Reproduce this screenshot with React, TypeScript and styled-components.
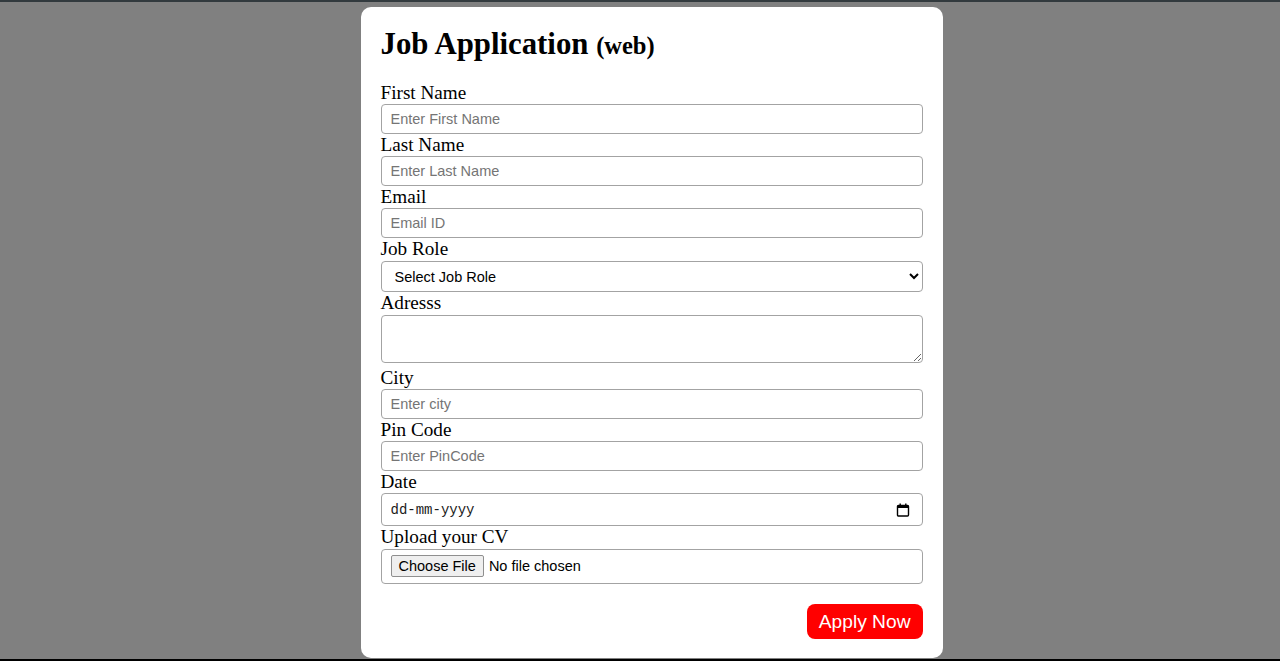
import styled, { createGlobalStyle } from 'styled-components';

const GlobalStyle = createGlobalStyle`
* {
  box-sizing: border-box;
}
body {
  margin: 0;
  background: #808080;
  font-family: "Liberation Serif", "Times New Roman", serif;
}
`;

const fields = [
  { label: 'First Name', placeholder: 'Enter First Name' },
  { label: 'Last Name', placeholder: 'Enter Last Name' },
  { label: 'Email', placeholder: 'Email ID', type: 'email' },
];

const CalendarIcon = () => (
  <svg width="14" height="14" viewBox="0 0 14 14" fill="none">
    <rect x="1.5" y="2.5" width="11" height="10.5" rx="1" stroke="#000" strokeWidth="1.4" />
    <rect x="1.5" y="2.5" width="11" height="2.5" fill="#000" />
    <rect x="3.5" y="0.5" width="1.4" height="2.5" fill="#000" />
    <rect x="9.1" y="0.5" width="1.4" height="2.5" fill="#000" />
  </svg>
);

const App = () => {
  return (
    <>
      <GlobalStyle />
      <Page>
        <Card>
          <Title>
            Job Application <Small>(web)</Small>
          </Title>

          <Form onSubmit={(e) => e.preventDefault()}>
            {fields.map((f) => (
              <Field key={f.label}>
                <Label>{f.label}</Label>
                <Input type={f.type || 'text'} placeholder={f.placeholder} />
              </Field>
            ))}

            <Field>
              <Label>Job Role</Label>
              <Select defaultValue="">
                <option value="">Select Job Role</option>
                <option value="frontend">Frontend Developer</option>
                <option value="backend">Backend Developer</option>
                <option value="fullstack">Full Stack Developer</option>
              </Select>
            </Field>

            <Field>
              <Label>Adresss</Label>
              <TextArea />
            </Field>

            <Field $top={4}>
              <Label>City</Label>
              <Input placeholder="Enter city" />
            </Field>

            <Field>
              <Label>Pin Code</Label>
              <Input placeholder="Enter PinCode" />
            </Field>

            <Field>
              <Label>Date</Label>
              <DateBox>
                <DateText placeholder="dd-mm-yyyy" inputMode="numeric" />
                <CalendarIcon />
              </DateBox>
            </Field>

            <Field>
              <Label>Upload your CV</Label>
              <FileInput type="file" />
            </Field>

            <Actions>
              <ApplyButton type="submit">Apply Now</ApplyButton>
            </Actions>
          </Form>
        </Card>
      </Page>
    </>
  );
};

export default App;

const Page = styled.div`
min-height: 100vh;
display: flex;
justify-content: center;
align-items: flex-start;
padding-left: 23px;
border-top: 2px solid #323a3e;
border-bottom: 2px solid #000;
`;

const Card = styled.div`
width: 582px;
margin-top: 5px;
background: #fff;
border-radius: 10px;
padding: 20px 20px 19px 20px;
`;

const Title = styled.h1`
margin: 0 0 19px 0;
font-size: 30.8px;
line-height: 35px;
font-weight: bold;
color: #000;
`;

const Small = styled.span`
font-size: 24.5px;
`;

const Form = styled.form`
display: flex;
flex-direction: column;
`;

const Field = styled.div<{ $top?: number }>`
display: flex;
flex-direction: column;
margin-top: ${(p) => p.$top || 0}px;
`;

const Label = styled.label`
display: block;
font-size: 19.2px;
line-height: 22px;
color: #000;
`;

const controlBase = `
width: 100%;
border: 1px solid #a3a3a3;
border-radius: 4px;
background: #fff;
font-family: "Liberation Sans", Arial, sans-serif;
font-size: 14.5px;
color: #000;
outline: none;
`;

const Input = styled.input`
${controlBase}
height: 30px;
padding: 0 9px;

&::placeholder {
  color: #757575;
}
`;

const Select = styled.select`
${controlBase}
height: 31px;
margin-top: 1px;
padding: 0 9px;
`;

const TextArea = styled.textarea`
${controlBase}
height: 48px;
margin-top: 1px;
padding: 4px 9px;
resize: vertical;
`;

const DateBox = styled.div`
${controlBase}
height: 33px;
display: flex;
align-items: center;
padding: 0 12px 0 9px;
`;

const DateText = styled.input`
flex: 1;
min-width: 0;
border: none;
outline: none;
padding: 0;
background: transparent;
font-family: "Liberation Mono", "DejaVu Sans Mono", monospace;
font-size: 14px;
color: #000;

&::placeholder {
  color: #1a1a1a;
}
`;

const FileInput = styled.input`
${controlBase}
height: 35px;
margin-top: 1px;
padding: 5px 9px;

&::file-selector-button {
  font-family: "Liberation Sans", Arial, sans-serif;
  font-size: 14.5px;
  height: 22px;
  padding: 0 7px;
  margin-right: 5px;
  border: 1px solid #8f8f8f;
  border-radius: 2px;
  background: #efefef;
  color: #000;
}
`;

const Actions = styled.div`
display: flex;
justify-content: flex-end;
margin-top: 20px;
`;

const ApplyButton = styled.button`
height: 35px;
padding: 0 12px;
border: none;
border-radius: 8px;
background: #ff0000;
color: #fff;
font-family: "Liberation Sans", Arial, sans-serif;
font-size: 19.2px;
cursor: pointer;
`;
